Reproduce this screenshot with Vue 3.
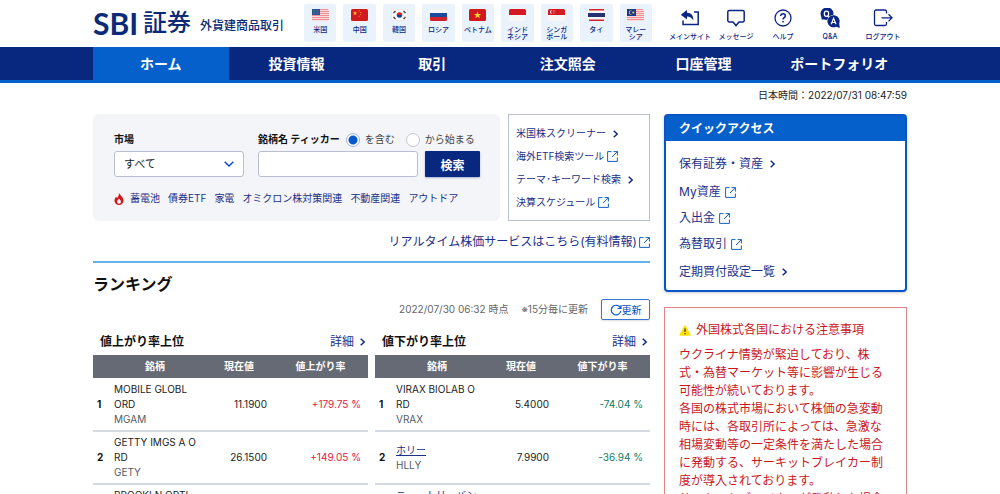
<script setup>
import { ref } from 'vue'

const countries = [
  { id: 'us', lines: ['米国'] },
  { id: 'cn', lines: ['中国'] },
  { id: 'kr', lines: ['韓国'] },
  { id: 'ru', lines: ['ロシア'] },
  { id: 'vn', lines: ['ベトナム'] },
  { id: 'id', lines: ['インド', 'ネシア'] },
  { id: 'sg', lines: ['シンガ', 'ポール'] },
  { id: 'th', lines: ['タイ'] },
  { id: 'my', lines: ['マレー', 'シア'] },
]

const utilities = [
  { id: 'main', label: 'メインサイト' },
  { id: 'message', label: 'メッセージ' },
  { id: 'help', label: 'ヘルプ' },
  { id: 'qa', label: 'Q&A' },
  { id: 'logout', label: 'ログアウト' },
]

const navItems = ['ホーム', '投資情報', '取引', '注文照会', '口座管理', 'ポートフォリオ']
const keywords = ['蓄電池', '債券ETF', '家電', 'オミクロン株対策関連', '不動産関連', 'アウトドア']

const toolLinks = [
  { label: '米国株スクリーナー', external: false },
  { label: '海外ETF検索ツール', external: true },
  { label: 'テーマ･キーワード検索', external: false },
  { label: '決算スケジュール', external: true },
]

const quickLinks = [
  { label: '保有証券・資産', external: false },
  { label: 'My資産', external: true },
  { label: '入出金', external: true },
  { label: '為替取引', external: true },
  { label: '定期買付設定一覧', external: false },
]

const rankings = [
  {
    title: '値上がり率上位',
    column: '値上がり率',
    tone: 'up',
    rows: [
      { name: ['MOBILE GLOBL', 'ORD'], code: 'MGAM', price: '11.1900', change: '+179.75 %' },
      { name: ['GETTY IMGS A O', 'RD'], code: 'GETY', price: '26.1500', change: '+149.05 %' },
      { name: ['BROOKLN OPTL', 'ORD'], code: 'BOTL', price: '3.2100', change: '+68.42 %' },
    ],
  },
  {
    title: '値下がり率上位',
    column: '値下がり率',
    tone: 'down',
    rows: [
      { name: ['VIRAX BIOLAB O', 'RD'], code: 'VRAX', price: '5.4000', change: '-74.04 %' },
      { name: ['ホリー'], link: true, code: 'HLLY', price: '7.9900', change: '-36.94 %' },
      { name: ['ニュートリーバン', 'ド'], link: true, code: 'NTRB', price: '4.8100', change: '-31.20 %' },
    ],
  },
]

const notice = [
  'ウクライナ情勢が緊迫しており、株',
  '式・為替マーケット等に影響が生じる',
  '可能性が続いております。',
  '各国の株式市場において株価の急変動',
  '時には、各取引所によっては、急激な',
  '相場変動等の一定条件を満たした場合',
  'に発動する、サーキットブレイカー制',
  '度が導入されております。',
  'サーキットブレイカーが発動した場合',
]

const market = ref('すべて')
const ticker = ref('')
const matchMode = ref('contains')
</script>

<template>
  <div class="page" lang="ja">
    <header class="header wrap">
      <a class="brand" href="#"><span class="brand-latin">SBI</span><span class="brand-kanji">証券</span></a>
      <span class="service">外貨建商品取引</span>
      <ul class="countries">
        <li v-for="c in countries" :key="c.id">
          <a href="#" class="country">
            <svg class="flag" viewBox="0 0 17 12" aria-hidden="true">
              <template v-if="c.id === 'us'">
                <rect width="17" height="12" rx="1.5" fill="#fbdcdc" />
                <path d="M1 .5H16M0 2.5H17M0 4.5H17M0 6.5H17M0 8.5H17M0 10.5H17" stroke="#ef8f93" />
                <rect width="8" height="6" fill="#2c5088" />
                <path d="M1 1.5H7M1 3.2H7M1 4.9H7" stroke="#8fa6c8" stroke-width=".5" stroke-dasharray=".6 .8" />
              </template>
              <template v-else-if="c.id === 'cn'">
                <rect width="17" height="12" rx="1.5" fill="#d0181d" />
                <path d="M4 2l.6 1.6h1.7L5 4.6l.5 1.7L4 5.3 2.6 6.3l.5-1.7-1.4-1h1.7z" fill="#fbc52c" />
                <path d="M7.5 1.5h1v1h-1zM9.3 3h1v1h-1zM9.3 5h1v1h-1zM7.5 6.7h1v1h-1z" fill="#f0a428" />
              </template>
              <template v-else-if="c.id === 'kr'">
                <rect x=".25" y=".25" width="16.5" height="11.5" rx="1.5" fill="#f7f7f7" stroke="#ddd" stroke-width=".5" />
                <path d="M5.7 6a2.8 2.8 0 0 1 5.6 0z" fill="#d0242c" />
                <path d="M5.7 6a2.8 2.8 0 0 0 5.6 0z" fill="#174594" />
                <path d="M2.5 4l2-2M12.5 2l2 2M2.5 8l2 2M12.5 10l2-2" stroke="#444" stroke-width="1.4" />
              </template>
              <template v-else-if="c.id === 'ru'">
                <rect width="17" height="12" rx="1.5" fill="#f4f4f4" />
                <path d="M0 4H17V8H0z" fill="#1949a0" />
                <path d="M0 8H17V10.5A1.5 1.5 0 0 1 15.500 12H1.5A1.5 1.5 0 0 1 0 10.500z" fill="#d0242c" />
              </template>
              <template v-else-if="c.id === 'vn'">
                <rect width="17" height="12" rx="1.5" fill="#d0181d" />
                <path d="M8.500 2.300l.9 2.600h2.800L10 6.600l.8 2.700-2.300-1.600-2.300 1.600.8-2.700-2.200-1.700h2.800z" fill="#ffd22e" />
              </template>
              <template v-else-if="c.id === 'id'">
                <rect width="17" height="12" rx="1.500" fill="#f6f6f6" />
                <path d="M0 6V1.500A1.500 1.500 0 0 1 1.500 0H15.500A1.500 1.500 0 0 1 17 1.500V6z" fill="#d51920" />
              </template>
              <template v-else-if="c.id === 'sg'">
                <rect width="17" height="12" rx="1.500" fill="#f6f6f6" />
                <path d="M0 6V1.500A1.500 1.500 0 0 1 1.500 0H15.500A1.500 1.500 0 0 1 17 1.500V6z" fill="#d51920" />
                <path d="M4 1a2 2 0 1 0 0 4 2.600 2.600 0 0 1 0-4" fill="#fff" />
                <path d="M5.500 1.500h.8M4.800 2.800h.8M6.500 2.800h.8M5.500 4.200h.8" stroke="#fff" stroke-width=".6" />
              </template>
              <template v-else-if="c.id === 'th'">
                <rect width="17" height="12" rx="1.500" fill="#f6f6f6" />
                <path d="M1 .8H16M1 11.200H16" stroke="#d8222a" stroke-width="1.600" />
                <path d="M0 6H17" stroke="#24336f" stroke-width="4" />
              </template>
              <template v-else>
                <rect width="17" height="12" rx="1.500" fill="#fbdcdc" />
                <path d="M1 .5H16M0 2.500H17M0 4.500H17M0 6.500H17M0 8.500H17M0 10.500H17" stroke="#ef8f93" />
                <rect width="9" height="7" fill="#1c3a85" />
                <path d="M5 1.200a2.400 2.400 0 1 0 0 4.600 2 2 0 1 1 0-4.600" fill="#fbd02e" />
                <circle cx="6.300" cy="3.500" r="1" fill="#fbd02e" />
              </template>
            </svg>
            <span class="country-name"><span v-for="l in c.lines" :key="l">{{ l }}</span></span>
          </a>
        </li>
      </ul>
      <ul class="utilities">
        <li v-for="u in utilities" :key="u.id">
          <a href="#" class="utility">
            <svg class="utility-icon" viewBox="0 0 20 20" fill="none" stroke="#0b2585" stroke-width="1.500" aria-hidden="true">
              <template v-if="u.id === 'main'">
                <path d="M14 4H18.200V16.500H3V12.500" />
                <path d="M.8 6.700L7 2V4.800C11.500 5 13.300 7.500 13.400 12.500C11.800 9.700 10 8.700 7 8.600V11.500z" fill="#0b2585" stroke="none" />
              </template>
              <path v-else-if="u.id === 'message'" d="M3.300 2.500H16.700A1.500 1.500 0 0 1 18.200 4V12.500A1.500 1.500 0 0 1 16.700 14H13L10 17.500L7 14H3.300A1.500 1.500 0 0 1 1.800 12.500V4A1.500 1.500 0 0 1 3.300 2.500z" />
              <template v-else-if="u.id === 'help'">
                <circle cx="10" cy="10" r="8" stroke-width="1.300" />
                <path d="M7.700 8C7.700 5 12.300 5.200 12.300 7.900C12.300 9.600 10 9.700 10 11.600M10 13V14.600" />
              </template>
              <template v-else-if="u.id === 'qa'">
                <path d="M1.500 11V6A6 6 0 1 1 7 11.500H1.500z" fill="#0b2585" stroke="none" />
                <circle cx="6.500" cy="5.800" r="6" fill="#0b2585" stroke="none" />
                <circle cx="13.600" cy="13.300" r="6.500" fill="#fff" stroke="none" />
                <path d="M13.600 7.300A6 6 0 0 1 19.200 15.500L19.800 20L16 18.700A6 6 0 1 1 13.600 7.300z" fill="#0b2585" stroke="none" />
                <ellipse cx="6.500" cy="5.800" rx="2.200" ry="2.700" stroke="#fff" stroke-width="1.200" />
                <path d="M7 7.300L9 9.300M11.200 16.200L13.600 10.300L16 16.200M12 14.500H15.200" stroke="#fff" stroke-width="1.200" />
              </template>
              <template v-else>
                <path d="M13.500 5.500V3.500A1.500 1.500 0 0 0 12 2H3A1.500 1.500 0 0 0 1.500 3.500V16A1.500 1.500 0 0 0 3 17.500H12A1.500 1.500 0 0 0 13.500 16V14" stroke-width="1.300" />
                <path d="M8.500 9.800H19M15.500 6.200L19 9.800L15.500 13.400" stroke-width="1.300" />
              </template>
            </svg>
            <span>{{ u.label }}</span>
          </a>
        </li>
      </ul>
    </header>

    <nav class="nav">
      <ul class="wrap nav-list">
        <li v-for="(item, i) in navItems" :key="item">
          <a href="#" class="nav-link" :class="{ active: i === 0 }">{{ item }}</a>
        </li>
      </ul>
    </nav>

    <p class="wrap clock">日本時間：2022/07/31 08:47:59</p>

    <div class="wrap columns">
      <main class="main">
        <div class="top-row">
          <form class="search" @submit.prevent>
            <div class="fields">
              <div class="field market">
                <label class="label-row" for="market">市場</label>
                <div class="select-box">
                  <select id="market" v-model="market">
                    <option>すべて</option>
                  </select>
                  <svg viewBox="0 0 10 6" aria-hidden="true"><path d="M.7.7L5 5L9.300.7" fill="none" stroke="#0a45c8" stroke-width="1.400" /></svg>
                </div>
              </div>
              <div class="field name">
                <div class="label-row">
                  <label for="ticker">銘柄名 ティッカー</label>
                  <label class="choice"><input v-model="matchMode" type="radio" name="match" value="contains" />を含む</label>
                  <label class="choice"><input v-model="matchMode" type="radio" name="match" value="starts" />から始まる</label>
                </div>
                <div class="input-row">
                  <input id="ticker" v-model="ticker" class="ticker" type="text" />
                  <button class="search-button" type="submit">検索</button>
                </div>
              </div>
            </div>
            <div class="keywords">
              <svg viewBox="0 0 10 12" aria-hidden="true">
                <path d="M5 0C6 2 9.500 4.500 9.500 7.500A4.500 4.500 0 0 1 .5 7.500C.5 5.800 1.500 4.800 2 3.800L3.200 5C4.300 3.800 5 2 5 0z" fill="#d5141c" />
                <path d="M5 5.500C5.600 6.800 7 7.300 7 8.800A2 2 0 0 1 3 8.800C3 7.300 4.500 6.800 5 5.500z" fill="#f4f5f8" />
              </svg>
              <a v-for="k in keywords" :key="k" href="#">{{ k }}</a>
            </div>
          </form>
          <ul class="tools">
            <li v-for="t in toolLinks" :key="t.label">
              <a href="#" :class="{ external: t.external }">
                {{ t.label }}
                <svg v-if="t.external" class="ext" viewBox="0 0 11 11" aria-hidden="true"><path d="M4.500.6H.6V10.400H10.400V6.500M6.500.6H10.400V4.500M10.400.6L5 6" /></svg>
                <svg v-else class="chevron" viewBox="0 0 5 8" aria-hidden="true"><path d="M.7.7L4.200 4L.7 7.300" /></svg>
              </a>
            </li>
          </ul>
        </div>

        <p class="realtime">
          <a href="#">リアルタイム株価サービスはこちら(有料情報)<svg class="ext" viewBox="0 0 11 11" aria-hidden="true"><path d="M4.500.6H.6V10.400H10.400V6.500M6.500.6H10.400V4.500M10.400.6L5 6" /></svg></a>
        </p>

        <section class="ranking">
          <h2>ランキング</h2>
          <div class="status">
            <span>2022/07/30 06:32 時点</span>
            <span>※15分毎に更新</span>
            <button type="button" class="refresh">
              <svg viewBox="0 0 12 12" aria-hidden="true"><path d="M10.500 4.200A4.800 4.800 0 1 0 10.800 7M11 1V4.500H7.500" fill="none" stroke="#0a5ad0" stroke-width="1.200" /></svg>更新
            </button>
          </div>
          <div class="tables">
            <div v-for="r in rankings" :key="r.title" class="rank-block">
              <div class="rank-head">
                <h3>{{ r.title }}</h3>
                <a href="#">詳細<svg class="chevron" viewBox="0 0 5 8" aria-hidden="true"><path d="M.7.7L4.200 4L.7 7.300" /></svg></a>
              </div>
              <table>
                <colgroup><col class="col-rank" /><col class="col-name" /><col class="col-price" /><col class="col-change" /></colgroup>
                <thead>
                  <tr><th colspan="2" class="th-name">銘柄</th><th>現在値</th><th>{{ r.column }}</th></tr>
                </thead>
                <tbody>
                  <tr v-for="(row, i) in r.rows" :key="row.code">
                    <td class="rank">{{ i + 1 }}</td>
                    <td>
                      <component :is="row.link ? 'a' : 'div'" :href="row.link ? '#' : null" :class="{ 'stock-link': row.link }">
                        <span v-for="part in row.name" :key="part" class="line">{{ part }}</span>
                      </component>
                      <div class="code">{{ row.code }}</div>
                    </td>
                    <td class="price">{{ row.price }}</td>
                    <td class="change" :class="r.tone">{{ row.change }}</td>
                  </tr>
                </tbody>
              </table>
            </div>
          </div>
        </section>
      </main>

      <aside class="side">
        <section class="quick">
          <h2>クイックアクセス</h2>
          <ul>
            <li v-for="q in quickLinks" :key="q.label" :class="{ external: q.external }">
              <a href="#">
                {{ q.label }}
                <svg v-if="q.external" class="ext" viewBox="0 0 11 11" aria-hidden="true"><path d="M4.500.6H.6V10.400H10.400V6.500M6.500.6H10.400V4.500M10.400.6L5 6" /></svg>
                <svg v-else class="chevron" viewBox="0 0 5 8" aria-hidden="true"><path d="M.7.7L4.200 4L.7 7.300" /></svg>
              </a>
            </li>
          </ul>
        </section>
        <section class="notice">
          <h2>
            <svg viewBox="0 0 12 11" aria-hidden="true"><path d="M6 1L11 10H1z" fill="#ffe100" stroke="#ffe100" stroke-width="1.500" stroke-linejoin="round" /><path d="M6 3.500V7M6 8V9.200" stroke="#333" stroke-width="1.200" /></svg>
            外国株式各国における注意事項
          </h2>
          <p><span v-for="l in notice" :key="l" class="line">{{ l }}</span></p>
        </section>
      </aside>
    </div>
  </div>
</template>

<style>
body {
  margin: 0;
  background: #fff;
}
</style>

<style scoped>
.page {
  height: 100vh;
  overflow: hidden;
  font-family: Inter, "Noto Sans CJK JP", sans-serif;
  font-size: 10px;
  line-height: 15px;
  color: #222;
}
.page * {
  box-sizing: border-box;
}
ul, p, h2, h3 {
  margin: 0;
  padding: 0;
  list-style: none;
}
a {
  color: #1b3088;
  text-decoration: none;
}
button, input, select {
  font-family: inherit;
  margin: 0;
}
.wrap {
  max-width: 814px;
  margin: 0 auto;
}
.line {
  display: block;
}

/* header */
.header {
  display: flex;
  align-items: center;
  height: 47px;
  padding-bottom: 1px;
}
.brand {
  display: flex;
  align-items: center;
  width: 107px;
  color: #0b2a78;
  line-height: 28px;
}
.brand-latin {
  width: 50px;
  font-family: Lato, sans-serif;
  font-size: 30px;
  font-weight: 700;
}
.brand-kanji {
  font-size: 24px;
  font-weight: 500;
}
.service {
  width: 104px;
  color: #0b2a78;
  font-size: 12px;
  font-weight: 500;
  white-space: nowrap;
  padding-top: 4px;
}
.countries {
  display: flex;
  gap: 7px;
  width: 348px;
}
.countries li {
  flex: 1;
}
.country {
  display: flex;
  flex-direction: column;
  align-items: center;
  height: 38px;
  padding-top: 5px;
  border-radius: 2px;
  background: #eaf3fb;
}
.flag {
  width: 17px;
  height: 12px;
  margin-bottom: 5px;
}
.country-name {
  display: flex;
  flex-direction: column;
  align-items: center;
  font-size: 7px;
  font-weight: 500;
  line-height: 7px;
  color: #0b2585;
  white-space: nowrap;
}
.utilities {
  display: grid;
  grid-template-columns: 46px 46px 48px 46px 1fr;
  flex: 1;
  margin-left: 15px;
  padding-top: 2px;
}
.utilities li:last-child {
  padding-left: 6px;
}
.utility {
  display: flex;
  flex-direction: column;
  align-items: center;
  gap: 4px;
  color: #0b2585;
  font-size: 7px;
  font-weight: 500;
  line-height: 9px;
  white-space: nowrap;
}
.utility-icon {
  width: 20px;
  height: 20px;
}

/* navigation */
.nav {
  background: #08277f;
  border-bottom: 3px solid #0560cb;
}
.nav-list {
  display: flex;
}
.nav-list li {
  flex: 1;
}
.nav-link {
  display: block;
  padding-top: 1px;
  line-height: 32px;
  text-align: center;
  color: #fff;
  font-size: 14px;
  font-weight: 700;
}
.nav-link.active {
  background: #0560cb;
}
.clock {
  padding: 5px 0 11px;
  text-align: right;
}

/* columns */
.columns {
  display: grid;
  grid-template-columns: minmax(0, 1fr) 243px;
  gap: 14px;
  align-items: start;
}
.top-row {
  display: grid;
  grid-template-columns: minmax(0, 1fr) 142px;
  gap: 8px;
}
.search {
  padding: 17px 20px 14px 21px;
  border-radius: 6px;
  background: #f4f5f8;
}
.fields {
  display: flex;
  gap: 14px;
}
.market {
  width: 130px;
}
.name {
  flex: 1;
}
.label-row {
  display: flex;
  align-items: center;
  height: 17px;
  margin-bottom: 3px;
  font-weight: 700;
  color: #111;
  white-space: nowrap;
}
.choice {
  display: flex;
  align-items: center;
  gap: 5px;
  margin-left: 6px;
  font-weight: 400;
  color: #444;
}
.choice + .choice {
  margin-left: 11px;
}
.choice input {
  appearance: none;
  width: 14px;
  height: 14px;
  border: 1px solid #c3c6d2;
  border-radius: 50%;
  background: #fff;
}
.choice input:checked {
  border-color: #9fb4dd;
  background: radial-gradient(circle, #0a57cc 4px, #fff 5px);
}
.select-box {
  display: grid;
  align-items: center;
}
.select-box select,
.select-box svg {
  grid-area: 1 / 1;
}
.select-box svg {
  justify-self: end;
  width: 10px;
  height: 6px;
  margin-right: 10px;
  pointer-events: none;
}
select,
.ticker {
  width: 100%;
  height: 26px;
  padding: 0 9px;
  border: 1px solid #b9bfce;
  border-radius: 3px;
  background: #fff;
  color: #222;
  font-size: 11px;
  appearance: none;
}
.input-row {
  display: flex;
  gap: 7px;
}
.ticker {
  flex: 1;
  min-width: 0;
}
.search-button {
  width: 55px;
  height: 26px;
  padding: 0;
  border: 0;
  border-radius: 1px;
  background: #08277f;
  color: #fff;
  font-size: 12px;
  font-weight: 700;
  box-shadow: 0 1px 2px #08277f55;
}
.keywords {
  display: flex;
  align-items: center;
  gap: 8px;
  margin-top: 14px;
  white-space: nowrap;
}
.keywords svg {
  width: 10px;
  height: 12px;
  margin-right: -2px;
}
.tools {
  display: flex;
  flex-direction: column;
  padding: 7px 7px 6px;
  border: 1px solid #b9c0d2;
}
.tools li {
  line-height: 23px;
}
.tools a,
.quick a,
.realtime a,
.rank-head a {
  display: inline-flex;
  align-items: center;
  gap: 7px;
  white-space: nowrap;
}
.tools a.external {
  gap: 3px;
}
.ext {
  width: 11px;
  height: 11px;
  fill: none;
  stroke: #1560c0;
  stroke-width: 1;
}
.chevron {
  width: 5px;
  height: 8px;
  fill: none;
  stroke: #0b2585;
  stroke-width: 1.4;
}
.realtime {
  padding: 12px 0 10px;
  border-bottom: 2px solid #66b1ea;
  text-align: right;
  font-size: 12px;
  line-height: 18px;
}
.realtime a {
  gap: 2px;
}

/* ranking */
.ranking h2 {
  margin-top: 10px;
  font-size: 16px;
  line-height: 22px;
  color: #111;
}
.status {
  display: flex;
  justify-content: flex-end;
  align-items: center;
  gap: 13px;
  margin-top: 4px;
  color: #666;
}
.refresh {
  display: flex;
  align-items: center;
  justify-content: center;
  width: 49px;
  height: 21px;
  padding: 0;
  border: 1px solid #3b74d2;
  border-radius: 2px;
  background: #fff;
  color: #0a50c4;
  font-size: 10px;
  box-shadow: 0 1px 2px #0002;
}
.refresh svg {
  width: 12px;
  height: 12px;
}
.tables {
  display: grid;
  grid-template-columns: 1fr 1fr;
  gap: 7px;
  margin-top: 13px;
}
.rank-head {
  display: flex;
  justify-content: space-between;
  align-items: center;
  padding: 0 3px 4px 7px;
  font-size: 12px;
  line-height: 18px;
}
.rank-head h3 {
  font-size: 12px;
  color: #111;
}
.rank-head a {
  gap: 6px;
}
table {
  width: 100%;
  table-layout: fixed;
  border-collapse: collapse;
}
.col-rank {
  width: 21px;
}
.col-name {
  width: 91px;
}
.col-price {
  width: 68px;
}
th {
  height: 23px;
  padding: 0;
  background: #656a75;
  color: #fff;
  font-weight: 700;
}
.th-name {
  padding-left: 12px;
}
td {
  height: 53px;
  padding: 0;
  border-bottom: 2px solid #d5d9e1;
  white-space: nowrap;
}
.rank {
  padding-left: 4px;
  font-weight: 700;
  color: #111;
}
.stock-link .line {
  text-decoration: underline;
}
.code {
  color: #555b66;
}
.price {
  padding-right: 6px;
  text-align: right;
}
.change {
  padding-right: 7px;
  text-align: right;
}
.up {
  color: #e3173e;
}
.down {
  color: #0b7b62;
}

/* sidebar */
.quick {
  border: 2px solid #0756c8;
  border-radius: 4px;
  box-shadow: 0 1px 3px #0003;
}
.quick h2 {
  padding-left: 13px;
  background: #0560cb;
  color: #fff;
  font-size: 12px;
  line-height: 25px;
}
.quick ul {
  padding: 8px 13px 3px;
}
.quick li {
  font-size: 12px;
  line-height: 30px;
}
.quick li.external {
  line-height: 26px;
}
.quick li.external a {
  gap: 4px;
}
.notice {
  margin-top: 15px;
  padding: 13px 14px;
  border: 1px solid #e08486;
  color: #c9171e;
  font-size: 12px;
  line-height: 18px;
}
.notice h2 {
  display: flex;
  align-items: center;
  gap: 5px;
  margin-bottom: 7px;
  font-size: 12px;
  font-weight: 400;
}
.notice svg {
  width: 12px;
  height: 11px;
}
</style>
